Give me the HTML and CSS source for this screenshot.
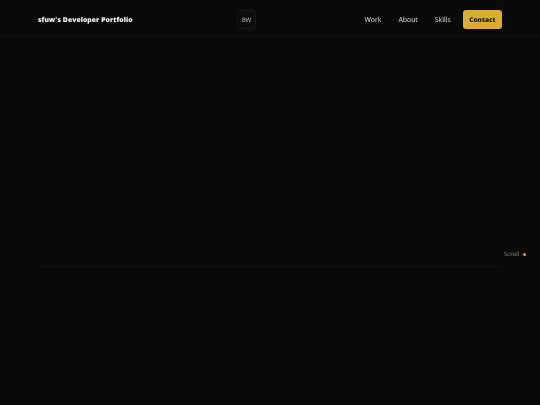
FILE: index.html
```html
<!DOCTYPE html>
<html lang="en">
  <head>
    <meta name="viewport" content="width=device-width, initial-scale=1" />
    <title>sfuw's Developer Portfolio</title>
    <link rel="stylesheet" href="styles.css">
  </head>

  <body>
    <header class="header">
      <a class="brand" href="#">sfuw's Developer Portfolio</a>
      <div class="logo">BW</div>
      <nav class="nav">
        <a href="#work">Work</a>
        <a href="#about">About</a>
        <a href="#skills">Skills</a>
        <a class="contact" href="#contact">Contact</a>
      </nav>
    </header>

    <section class="hero">
      <div class="scroll">
        Scroll
        <span class="dot"></span>
      </div>
    </section>
  </body>
</html>
```

FILE: styles.css
```css
html, body {
  margin: 0;
  height: 100%;
}

body {
  background-color: #0a0a0a;
  font-family: "Open Sans", sans-serif;
  text-rendering: geometricPrecision;
  overflow: hidden;
}

a {
  text-decoration: none;
}

.header {
  height: 19px;
  padding: 10px 38px 7px;
  display: flex;
  align-items: center;
  justify-content: space-between;
  border-bottom: 1px solid #131313;
  will-change: transform;
}

.brand {
  color: #f7f7f7;
  font-size: 6.75px;
  font-weight: 800;
  letter-spacing: 0.1px;
}

.logo {
  width: 17px;
  height: 17px;
  margin-left: -4px;
  display: flex;
  align-items: center;
  justify-content: center;
  background: #0b0b0b;
  border: 1px solid #171717;
  border-radius: 4px;
  color: #c4c4c4;
  font-size: 6px;
  font-weight: 500;
}

.nav {
  display: flex;
  align-items: center;
  gap: 17px;
  font-size: 6.9px;
  font-weight: 500;
}

.nav a {
  padding-top: 2px;
  color: #e2e2e2;
}

.nav .contact {
  margin-left: -5px;
  padding: 0 6.5px;
  height: 19px;
  display: flex;
  align-items: center;
  background: #d9ae32;
  border-radius: 3px;
  color: #111111;
  font-size: 6.5px;
  font-weight: 800;
}

.hero {
  height: 229px;
  margin: 0 38px;
  display: flex;
  align-items: flex-end;
  justify-content: flex-end;
  border-bottom: 1px solid #141414;
}

.scroll {
  margin-bottom: 8px;
  margin-right: -24px;
  display: flex;
  align-items: center;
  gap: 4px;
  color: #8c8c8c;
  font-size: 6px;
  font-weight: 500;
  will-change: transform;
}

.dot {
  width: 3px;
  height: 3px;
  border-radius: 50%;
  background: #cba83c;
}
```
